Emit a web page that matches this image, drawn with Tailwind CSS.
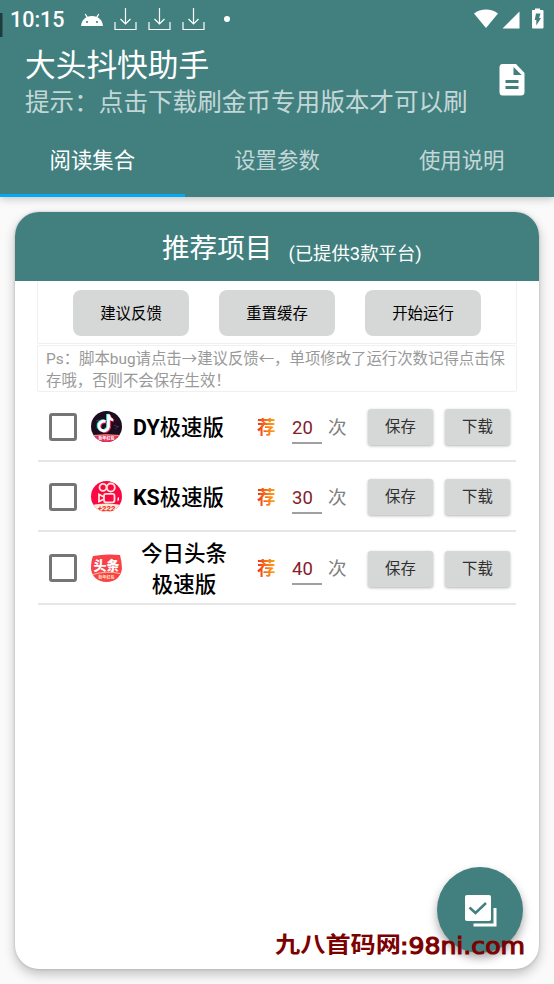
<!DOCTYPE html>
<html lang="zh-CN">
<head>
<meta charset="utf-8">
<title>大头抖快助手</title>
<script src="https://cdn.jsdelivr.net/npm/@tailwindcss/browser@4"></script>
</head>
<body class="relative w-[554px] h-[984px] overflow-hidden bg-[#fafafa] font-[Roboto,'Noto_Sans_CJK_SC',sans-serif]">
<header class="relative h-[197px] bg-[#42807f] text-white shadow-[0_2px_8px_rgba(0,0,0,0.22)]">
  <div class="flex h-[39px] items-center pl-[10px] pr-[10px]">
    <span class="w-[71px] text-[21.5px] leading-[39px] font-medium">10:15</span>
    <svg class="w-[22px] h-[14px] mt-[1px]" viewBox="0 0 22 14"><path d="M0 13C.4 8.500 2.400 5.800 5.400 4.200L3.700 1.300L4.800.700L6.600 3.700C9.400 2.600 12.600 2.600 15.400 3.700L17.200.700L18.300 1.300L16.600 4.200C19.600 5.800 21.600 8.500 22 13Z" fill="white"/><circle cx="6" cy="9" r="1.100" fill="#42807f"/><circle cx="16" cy="9" r="1.100" fill="#42807f"/></svg>
    <div class="flex gap-[11px] ml-[11px]">
      <svg class="w-[23px] h-[23px] mb-[1px]" viewBox="0 0 23 23" fill="none" stroke="white" stroke-width="1.200"><path d="M11.500 0V16M6.500 11L11.500 16L16.500 11M1 14V21.500H22V14"/></svg>
      <svg class="w-[23px] h-[23px] mb-[1px]" viewBox="0 0 23 23" fill="none" stroke="white" stroke-width="1.200"><path d="M11.500 0V16M6.500 11L11.500 16L16.500 11M1 14V21.500H22V14"/></svg>
      <svg class="w-[23px] h-[23px] mb-[1px]" viewBox="0 0 23 23" fill="none" stroke="white" stroke-width="1.200"><path d="M11.500 0V16M6.500 11L11.500 16L16.500 11M1 14V21.500H22V14"/></svg>
    </div>
    <i class="w-[6px] h-[6px] rounded-full bg-white ml-[19px] mb-[2px]"></i>
    <svg class="w-[70px] h-[22px] ml-auto mb-[1px]" viewBox="0 0 70 22" fill="white"><path d="M0 5.500C6.500.200 17.500.200 24 5.500L12 20Z"/><path d="M28.500 20.500L45.500 3.500V20.500Z"/><path d="M58.500 2H61V.5H66V2H68.500Q69.500 2 69.500 3V19.500Q69.500 20.500 68.500 20.500H59Q58 20.500 58 19.500V3Q58 2 58.500 2Z"/><path d="M62 5.500H66.500L65.200 10H67L62.300 17.500V12H60.700Z" fill="#42807f"/></svg>
  </div>
  <div class="flex h-[85px] pl-[25px] pr-[29px] justify-between">
    <div class="pt-px">
      <h1 class="h-[44px] text-[30.7px] leading-[52px] whitespace-nowrap">大头抖快助手</h1>
      <p class="text-[24.6px] leading-[37px] text-white/70 whitespace-nowrap">提示：点击下载刷金币专用版本才可以刷</p>
    </div>
    <svg class="w-[26px] h-[32px] mt-[25px]" viewBox="0 0 26 32"><path d="M3.500 0H17L25.500 9V28Q25.500 31.500 22 31.500H3.500Q.500 31.500.500 28V3.500Q.500 0 3.500 0Z" fill="white"/><path d="M14.500 3V11H22.700ZM6.500 16H19.500V19H6.500ZM6.500 22H19.500V25H6.500Z" fill="#42807f"/></svg>
  </div>
  <nav class="grid grid-cols-3 h-[73px] text-center text-[21.4px] leading-[74px] text-white/70">
    <span class="h-[73px] border-b-[3px] border-[#03a9f4] text-white">阅读集合</span>
    <span>设置参数</span>
    <span>使用说明</span>
  </nav>
  <i class="absolute left-0 top-[13px] w-[3px] h-[24px] border-r border-[#315e5d] bg-[#1f3c3c]"></i>
</header>

<main class="mt-[15px] mx-[15px] h-[757px] w-[524px] rounded-[24px] overflow-hidden bg-white shadow-[0_5px_12px_rgba(0,0,0,0.24),0_0_3px_rgba(0,0,0,0.18)]">
  <div class="flex h-[69px] items-start bg-[#42807f] pl-[147px] text-white whitespace-nowrap">
    <h2 class="text-[27.6px] leading-[73px]">推荐项目</h2>
    <span class="ml-[16px] text-[18.4px] leading-[84px]">(已提供3款平台)</span>
  </div>
  <div class="mx-[22px]">
    <div class="flex h-[63px] pl-[35px] pt-[9px] border border-t-0 border-[#f0f0f0] rounded-[2px] text-[15.4px] text-center text-black">
      <button class="w-[116px] h-[46px] mr-[30px] rounded-[8px] bg-[#d6d8d7] pt-[3px]">建议反馈</button>
      <button class="w-[116px] h-[46px] mr-[30px] rounded-[8px] bg-[#d6d8d7] pt-[3px]">重置缓存</button>
      <button class="w-[116px] h-[46px] rounded-[8px] bg-[#d6d8d7] pt-[3px]">开始运行</button>
    </div>
    <p class="mt-[1px] h-[47px] pl-[8px] pt-[2px] border border-[#f0f0f0] rounded-[2px] text-[15.4px] leading-[22px] text-[#999] whitespace-nowrap">Ps：脚本bug请点击→建议反馈←，单项修改了运行次数记得点击保<br>存哦，否则不会保存生效！</p>
  </div>

  <ul class="mx-[23px]">
    <li class="flex h-[70px] items-center pl-[11px] border-b-2 border-[#e6e6e6]">
      <i class="shrink-0 w-[28px] h-[28px] mt-px rounded-[3px] border-3 border-[#757575]"></i>
      <svg class="shrink-0 w-[31px] h-[31px] ml-[14px]" viewBox="0 0 31 31"><defs><clipPath id="round"><circle cx="15.500" cy="15.500" r="15.500"/></clipPath></defs><g clip-path="url(#round)"><path fill="#1c0c20" d="M0 0H31V31H0Z"/><path d="M5 10L8 9M23 14L27 16M24 18L28 15M5 17L8 15" stroke="#54294b"/><g fill="none" stroke-width="2.700"><path d="M14.500 10.500A4.800 4.800 0 1 0 17.500 16V3.500C18 6.500 19.500 8.500 22 9" stroke="#2ff0ea" transform="translate(-1 -.5)"/><path d="M14.500 10.500A4.800 4.800 0 1 0 17.500 16V3.500C18 6.500 19.500 8.500 22 9" stroke="#ff2858" transform="translate(1 .8)"/><path d="M14.500 10.500A4.800 4.800 0 1 0 17.500 16V3.500C18 6.500 19.500 8.500 22 9" stroke="white"/></g><path fill="#ed2d60" d="M0 24.500Q15 23 31 24.500V31H0Z"/><path d="M2 24.500Q15 23 29 24.500" stroke="#f5a07f" fill="none"/><text x="15.500" y="29.300" font-family="Noto Sans CJK SC" font-size="4" font-weight="700" fill="white" text-anchor="middle">新年红包</text></g></svg>
      <b class="shrink-0 w-[124px] ml-[11px] pt-[4px] text-[21.4px] font-bold whitespace-nowrap">DY<span class="font-medium">极速版</span></b>
      <b class="shrink-0 w-[35px] pt-[5px] text-[18.5px] font-bold"><span class="bg-linear-to-r from-[#f02b16] to-[#faa71c] bg-clip-text text-transparent">荐</span></b>
      <span class="shrink-0 w-[30px] h-[33px] border-b-2 border-[#a0a0a0] text-[18.5px] leading-[34px] text-[#84202c] mt-[2px]">20</span>
      <span class="shrink-0 w-[46px] pl-[6px] pt-[5px] text-[18.5px] text-[#808080]">次</span>
      <button class="shrink-0 w-[65px] h-[36px] mt-[2px] rounded-[3px] bg-[#d6d8d7] pt-[2px] text-[15.4px] text-[#303030] shadow-[0_1px_3px_rgba(0,0,0,0.3)]">保存</button>
      <button class="shrink-0 w-[65px] h-[36px] mt-[2px] ml-[12px] rounded-[3px] bg-[#d6d8d7] pt-[2px] text-[15.4px] text-[#303030] shadow-[0_1px_3px_rgba(0,0,0,0.3)]">下载</button>
    </li>
    <li class="flex h-[70px] items-center pl-[11px] border-b-2 border-[#e6e6e6]">
      <i class="shrink-0 w-[28px] h-[28px] mt-px rounded-[3px] border-3 border-[#757575]"></i>
      <svg class="shrink-0 w-[31px] h-[31px] ml-[14px]" viewBox="0 0 31 31"><g clip-path="url(#round)"><path fill="#fb0745" d="M0 0H31V31H0Z"/><g fill="none" stroke="#ffe5d5" stroke-width="1.800"><circle cx="12" cy="6.300" r="3.500"/><circle cx="19.800" cy="6.500" r="4"/><rect x="13" y="12.800" width="10.500" height="8.500" rx="2"/><path d="M13 16L8 13.500V20.500L13 18"/></g><path d="M26.500 17L28 16L28 19L26.500 20.500" fill="white"/><path d="M0 24Q15 21 31 24V31H0Z" fill="#ffead9"/><text x="15.500" y="29.800" font-family="Roboto" font-size="8" font-weight="900" font-style="italic" fill="#f23b2e" text-anchor="middle">+222</text></g></svg>
      <b class="shrink-0 w-[124px] ml-[11px] pt-[4px] text-[21.4px] font-bold whitespace-nowrap">KS<span class="font-medium">极速版</span></b>
      <b class="shrink-0 w-[35px] pt-[5px] text-[18.5px] font-bold"><span class="bg-linear-to-r from-[#f02b16] to-[#faa71c] bg-clip-text text-transparent">荐</span></b>
      <span class="shrink-0 w-[30px] h-[33px] border-b-2 border-[#a0a0a0] text-[18.5px] leading-[34px] text-[#84202c] mt-[2px]">30</span>
      <span class="shrink-0 w-[46px] pl-[6px] pt-[5px] text-[18.5px] text-[#808080]">次</span>
      <button class="shrink-0 w-[65px] h-[36px] mt-[2px] rounded-[3px] bg-[#d6d8d7] pt-[2px] text-[15.4px] text-[#303030] shadow-[0_1px_3px_rgba(0,0,0,0.3)]">保存</button>
      <button class="shrink-0 w-[65px] h-[36px] mt-[2px] ml-[12px] rounded-[3px] bg-[#d6d8d7] pt-[2px] text-[15.4px] text-[#303030] shadow-[0_1px_3px_rgba(0,0,0,0.3)]">下载</button>
    </li>
    <li class="flex h-[73px] items-center pl-[11px] border-b-2 border-[#e6e6e6]">
      <i class="shrink-0 w-[28px] h-[28px] rounded-[3px] border-3 border-[#757575]"></i>
      <svg class="shrink-0 w-[31px] h-[31px] ml-[14px] mt-[2px]" viewBox="0 0 31 31"><path d="M2 3Q15 .5 29 2Q31 10 31 15.500C30 24 24 29 15.500 29C7 29 1 24 0 16Q0 8 2 3Z" fill="#f94147"/><text x="15.500" y="16.500" font-family="Noto Sans CJK SC" font-size="13" font-weight="900" fill="white" text-anchor="middle">头条</text><path d="M2 21.500Q15 17.500 29 20.500" stroke="#ffc29b" fill="none"/><text x="15.500" y="26" font-family="Noto Sans CJK SC" font-size="4" font-weight="700" fill="#ffe5bd" text-anchor="middle">新年红包</text></svg>
      <b class="shrink-0 w-[102px] mr-[22px] ml-[11px] pt-[2px] text-[21.5px] leading-[31px] font-medium text-center">今日头条<br>极速版</b>
      <b class="shrink-0 w-[35px] pt-[4px] text-[18.5px] font-bold"><span class="bg-linear-to-r from-[#f02b16] to-[#faa71c] bg-clip-text text-transparent">荐</span></b>
      <span class="shrink-0 w-[30px] h-[33px] border-b-2 border-[#a0a0a0] text-[18.5px] leading-[35px] text-[#84202c] mt-[2px]">40</span>
      <span class="shrink-0 w-[46px] pl-[6px] pt-[5px] text-[18.5px] text-[#808080]">次</span>
      <button class="shrink-0 w-[65px] h-[36px] mt-[2px] rounded-[3px] bg-[#d6d8d7] pt-[2px] text-[15.4px] text-[#303030] shadow-[0_1px_3px_rgba(0,0,0,0.3)]">保存</button>
      <button class="shrink-0 w-[65px] h-[36px] mt-[2px] ml-[12px] rounded-[3px] bg-[#d6d8d7] pt-[2px] text-[15.4px] text-[#303030] shadow-[0_1px_3px_rgba(0,0,0,0.3)]">下载</button>
    </li>
  </ul>
</main>

<button class="absolute left-[437px] top-[867px] w-[86px] h-[86px] rounded-full bg-[#42807f] shadow-[0_5px_10px_rgba(0,0,0,0.35)]">
  <svg class="absolute left-[28px] top-[28px] w-[32px] h-[32px]" viewBox="0 0 32 32"><rect width="26" height="26" rx="2" fill="white"/><path d="M4.500 12.500L10.500 18L21 8" fill="none" stroke="#42807f" stroke-width="2.500"/><path d="M8.500 30H30V13" fill="none" stroke="white" stroke-width="3"/></svg>
</button>
<svg class="absolute left-[270px] top-[926px] w-[270px] h-[40px]" viewBox="0 0 270 40" fill="#7d0000"><text x="5" y="26" font-family="Noto Sans CJK SC" font-size="22" font-weight="700" textLength="126" lengthAdjust="spacingAndGlyphs">九八首码网</text><text x="130" y="28" font-family="DejaVu Sans" font-size="22.500" stroke="#7d0000" stroke-width="1.100" textLength="125" lengthAdjust="spacingAndGlyphs">:98ni.com</text></svg>
</body>
</html>
